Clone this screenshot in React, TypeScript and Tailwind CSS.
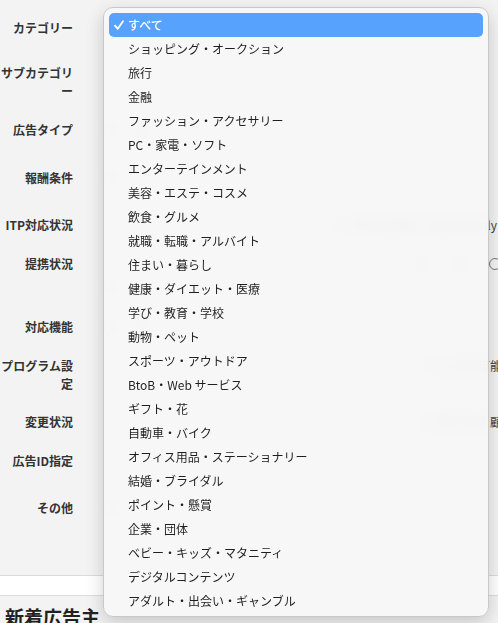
import React from "react";

const categories = [
  "ショッピング・オークション",
  "旅行",
  "金融",
  "ファッション・アクセサリー",
  "PC・家電・ソフト",
  "エンターテインメント",
  "美容・エステ・コスメ",
  "飲食・グルメ",
  "就職・転職・アルバイト",
  "住まい・暮らし",
  "健康・ダイエット・医療",
  "学び・教育・学校",
  "動物・ペット",
  "スポーツ・アウトドア",
  "BtoB・Web サービス",
  "ギフト・花",
  "自動車・バイク",
  "オフィス用品・ステーショナリー",
  "結婚・ブライダル",
  "ポイント・懸賞",
  "企業・団体",
  "ベビー・キッズ・マタニティ",
  "デジタルコンテンツ",
  "アダルト・出会い・ギャンブル",
];

function Box() {
  return <span className="inline-block w-[12px] h-[12px] border border-[#9a9a9a] rounded-[3px] bg-white shrink-0" />;
}

function Opt({ text }: { text: string }) {
  return (
    <span className="inline-flex items-center gap-[5px] shrink-0">
      <Box />
      <span>{text}</span>
    </span>
  );
}

export default function App() {
  return (
    <div
      className="relative w-full h-[623px] overflow-hidden bg-[#f3f3f3] text-[#333]"
      style={{ fontFamily: "'Noto Sans CJK JP', 'Noto Sans', sans-serif" }}
    >
      {/* form behind the menu */}
      <div className="flex flex-col pt-[6px] h-[576px] border-b border-[#dcdcdc]">
        <Row label="カテゴリー" h="h-[44px]">
          <div className="w-[240px] h-[24px] bg-white border border-[#cfcfcf] rounded-[4px]" />
        </Row>
        <Row label="サブカテゴリー" h="h-[64px]">
          <div className="w-[240px] h-[24px] bg-white border border-[#cfcfcf] rounded-[4px]" />
        </Row>
        <Row label="広告タイプ" h="h-[32px]">
          <div className="flex gap-[20px]">
            <Box />
            <Box />
          </div>
        </Row>
        <Row label="報酬条件" h="h-[64px]">
          <div className="flex gap-[20px]">
            <Box />
          </div>
        </Row>
        <Row label="ITP対応状況" h="h-[30px]">
          <div className="w-[392px] flex justify-end gap-[24px] text-[12px] text-[#444] whitespace-nowrap">
            <Opt text="ITP対応済み（Cookie only" />
          </div>
        </Row>
        <Row label="提携状況" h="h-[58px]" top>
          <div className="flex flex-col gap-[10px] pt-[18px]">
            <div className="w-[396px] flex justify-end items-center gap-[24px] text-[12px] text-[#444] whitespace-nowrap">
              <Box />
              <Box />
              <span className="inline-block w-[12px] h-[12px] border border-[#777] rounded-full shrink-0" />
            </div>
            <div className="flex gap-[20px]">
              <Box />
            </div>
          </div>
        </Row>
        <Row label="対応機能" h="h-[58px]">
          <div className="flex gap-[20px]">
            <Box />
            <Box />
          </div>
        </Row>
        <Row label="プログラム設定" h="h-[37px]">
          <div className="w-[397px] flex justify-end gap-[24px] text-[12px] text-[#444] whitespace-nowrap -mt-[17px]">
            <Opt text="スマホ可能" />
          </div>
        </Row>
        <Row label="変更状況" h="h-[58px]">
          <div className="w-[397px] flex justify-end gap-[24px] text-[12px] text-[#444] whitespace-nowrap">
            <Opt text="終了予定 顧" />
          </div>
        </Row>
        <Row label="広告ID指定" h="h-[20px]">
          <div className="w-[240px] h-[22px] bg-white border border-[#cfcfcf] rounded-[4px]" />
        </Row>
        <Row label="その他" h="h-[74px]">
          <div className="flex gap-[20px]">
            <Box />
          </div>
        </Row>
      </div>
      <div className="h-[20px] bg-white border-b border-[#dcdcdc]" />
      <div className="px-[5px] pt-[9px]">
        <h2 className="text-[19px] font-bold text-[#222] leading-[24px]">新着広告主</h2>
      </div>

      {/* open popup menu */}
      <div className="absolute left-[103px] top-[7px] w-[386px] h-[610px] p-[5px] rounded-[10px] bg-[#f7f7f7]/[0.94] backdrop-blur-[6px] border border-[#c8c8c8] shadow-[0_6px_18px_rgba(0,0,0,0.18)]">
        <div className="relative flex items-center h-[24px] pl-[19px] rounded-[5px] bg-[#57a2fd] text-white text-[12px] font-medium">
          <svg className="absolute left-[5px] top-[7px]" width="10" height="10" viewBox="0 0 10 10" fill="none">
            <path d="M1 5.6 L3.8 8.8 L9 1.2" stroke="white" strokeWidth="1.8" strokeLinecap="round" strokeLinejoin="round" />
          </svg>
          <span>すべて</span>
        </div>
        {categories.map((c) => (
          <div key={c} className="flex items-center h-[24px] pl-[19px] text-[12px] text-[#1f1f1f]">
            {c}
          </div>
        ))}
      </div>
    </div>
  );
}

function Row({
  label,
  h,
  top,
  children,
}: {
  label: string;
  h: string;
  top?: boolean;
  children?: React.ReactNode;
}) {
  return (
    <div className={`flex ${h} ${top ? "items-start" : "items-center"}`}>
      <div
        className={`w-[73px] shrink-0 text-right text-[12px] font-bold leading-[18px] text-[#333] ${
          top ? "pt-[15px]" : ""
        }`}
      >
        {label}
      </div>
      <div className="pl-[32px] shrink-0">{children}</div>
    </div>
  );
}
